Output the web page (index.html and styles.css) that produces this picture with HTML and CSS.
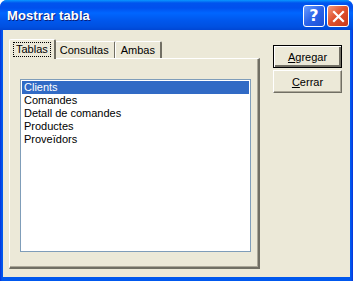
FILE: index.html
```html
<!DOCTYPE html>
<html lang="es">
<head>
  <meta charset="UTF-8" />
  <title>Mostrar tabla</title>
  <link rel="stylesheet" href="styles.css">
</head>
<body>
<div class="window">
  <div class="titlebar">
    <span class="title">Mostrar tabla</span>
    <div class="caption-buttons">
      <button class="cap help">?</button>
      <button class="cap close">
        <svg width="13" height="13" viewBox="0 0 13 13">
          <path d="M2 2 L11 11 M11 2 L2 11" stroke="#fff" stroke-width="2.2" stroke-linecap="square" />
        </svg>
      </button>
    </div>
  </div>

  <div class="client">
    <div class="tabs-area">
      <div class="tabs">
        <div class="tab active"><span class="focus">Tablas</span></div>
        <div class="tab">Consultas</div>
        <div class="tab">Ambas</div>
      </div>
      <div class="panel">
        <ul class="listbox">
          <li class="selected">Clients</li>
          <li>Comandes</li>
          <li>Detall de comandes</li>
          <li>Productes</li>
          <li>Proveïdors</li>
        </ul>
      </div>
    </div>

    <div class="actions">
      <button class="btn default"><u>A</u>gregar</button>
      <button class="btn"><u>C</u>errar</button>
    </div>
  </div>
</div>
</body>
</html>
```

FILE: styles.css
```css
* {
  box-sizing: border-box;
}

body {
  margin: 0;
  font-family: "Liberation Sans", Arial, sans-serif;
  font-size: 11px;
  color: #000;
}

.window {
  width: 353px;
  height: 281px;
  background: linear-gradient(to right, #0831d9, #0058ee 2px, #0058ee 351px, #0831d9);
  border-radius: 7px 7px 0 0;
  display: flex;
  flex-direction: column;
  overflow: hidden;
}

/* barra de titulo */
.titlebar {
  height: 30px;
  display: flex;
  align-items: center;
  justify-content: space-between;
  padding: 0 4px 0 7px;
  background: linear-gradient(to bottom, #0997ff 0, #0053ee 3px, #0050ee 8px, #0066ff 13px, #0058ee 20px, #0050e0 27px, #0046d4 30px);
}

.title {
  color: #fff;
  font-weight: bold;
  font-size: 13px;
  letter-spacing: 0.1px;
  text-shadow: 1px 1px 0 #0a1e7a;
  margin-top: 1px;
}

.caption-buttons {
  display: flex;
  gap: 2px;
  margin-top: 2px;
}

.cap {
  width: 22px;
  height: 22px;
  border: 1px solid #fff;
  border-radius: 3px;
  padding: 0;
  display: flex;
  align-items: center;
  justify-content: center;
}

.help {
  background: linear-gradient(135deg, #6a9bff 0%, #2a63e9 50%, #1b4fd6 100%);
  color: #fff;
  font-family: "DejaVu Sans", sans-serif;
  font-weight: bold;
  font-size: 16px;
  line-height: 1;
}

.close {
  background: linear-gradient(135deg, #f29a7d 0%, #e1532f 45%, #c9391a 100%);
}

/* area cliente */
.client {
  flex: 1;
  margin: 0 3px 4px 3px;
  background: #ece9d8;
  display: flex;
  padding: 9px 0 0 6px;
}

.tabs-area {
  width: 251px;
  display: flex;
  flex-direction: column;
}

.tabs {
  display: flex;
  height: 19px;
  align-items: flex-end;
  position: relative;
  z-index: 1;
}

.tab {
  height: 17px;
  padding: 2px 5px 0 5px;
  border: 1px solid #fff;
  border-right: 2px solid #716f64;
  border-bottom: none;
  border-radius: 2px 2px 0 0;
  background: #ece9d8;
  margin-left: -1px;
  line-height: 13px;
}

.tab.active {
  height: 20px;
  margin-left: 0;
  padding: 2px 3px 0 3px;
  margin-bottom: -1px;
  margin-right: -1px;
  position: relative;
  z-index: 2;
}

.focus {
  display: inline-block;
  border: 1px dotted #000;
  padding: 0 2px;
  line-height: 13px;
}

.panel {
  height: 211px;
  border-top: 1px solid #fff;
  border-left: 1px solid #fff;
  border-right: 2px solid #716f64;
  border-bottom: 2px solid #716f64;
  box-shadow: inset -1px -1px 0 #aca899;
  padding: 20px 0 0 10px;
}

.listbox {
  list-style: none;
  margin: 0;
  padding: 1px;
  width: 231px;
  height: 173px;
  background: #fff;
  border: 1px solid #7f9db9;
}

.listbox li {
  height: 13px;
  line-height: 13px;
  padding-left: 2px;
}

.listbox li.selected {
  background: #316ac5;
  color: #fff;
}

/* botones */
.actions {
  margin-left: 13px;
  padding-top: 6px;
  display: flex;
  flex-direction: column;
  gap: 2px;
}

.btn {
  width: 69px;
  height: 23px;
  font-family: inherit;
  font-size: 11px;
  background: #ece9d8;
  color: #000;
  border: 1px solid;
  border-color: #fff #716f64 #716f64 #fff;
  box-shadow: inset -1px -1px 0 #aca899;
  padding: 0;
}

.btn.default {
  border: 1px solid #000;
  box-shadow: inset 1px 1px 0 #fff, inset -2px -2px 0 #716f64;
}
```
